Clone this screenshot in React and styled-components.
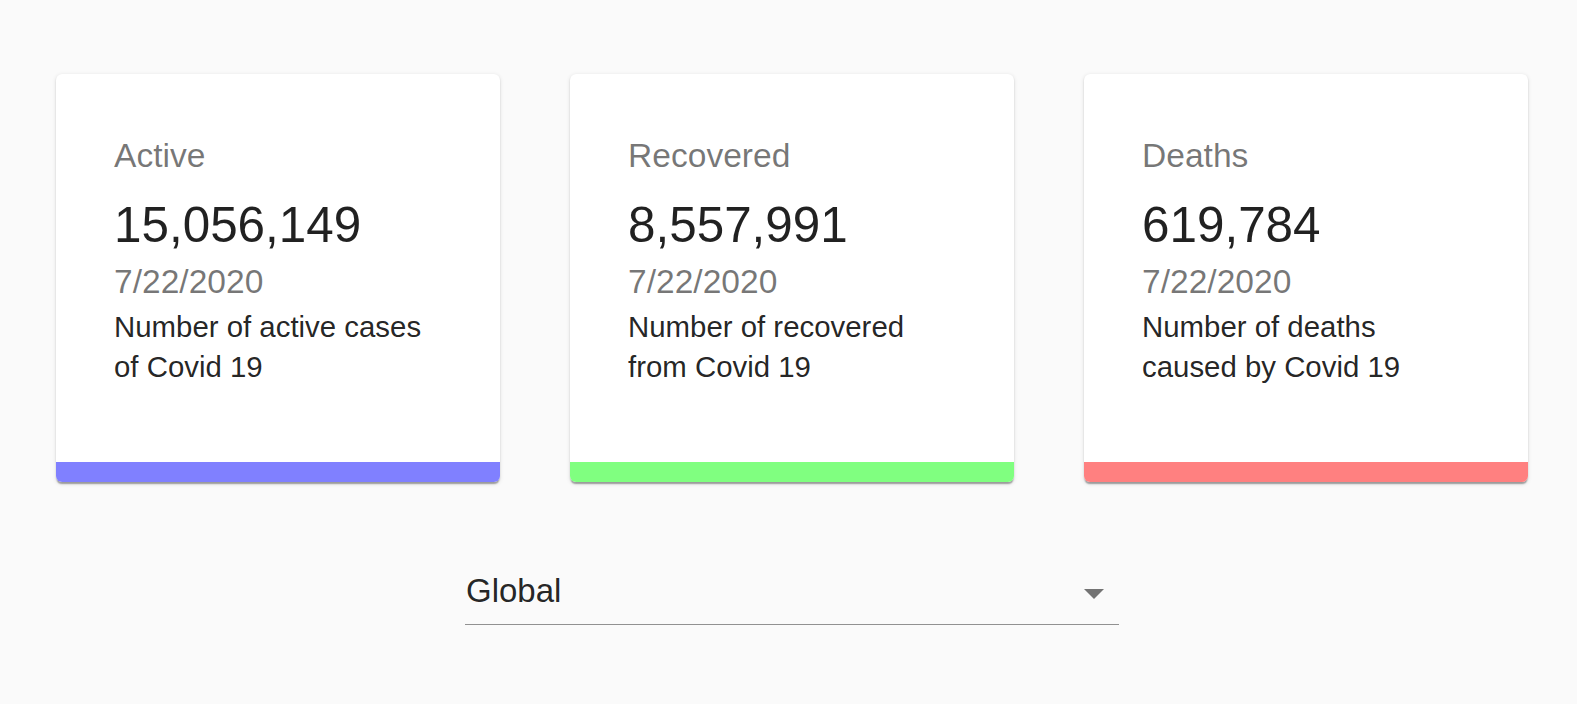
import React from "react";
import styled, { createGlobalStyle } from "styled-components";

const GlobalStyle = createGlobalStyle`
  html, body {
    margin: 0;
    padding: 0;
    background: #fafafa;
    font-family: "Liberation Sans", Arial, Helvetica, sans-serif;
  }
  * { box-sizing: border-box; }
`;

const Page = styled.main`
  width: 1472px;
  margin-left: 56px;
  padding-top: 74px;
`;

const CardGrid = styled.section`
  display: grid;
  grid-template-columns: repeat(3, 444px);
  column-gap: 70px;
`;

const Card = styled.article`
  display: flex;
  flex-direction: column;
  background: #fff;
  border-radius: 6px;
  overflow: hidden;
  height: 408px;
  box-shadow: 0 3px 1.4px -1.4px rgba(0, 0, 0, 0.2),
    0 1.4px 1.4px 0 rgba(0, 0, 0, 0.14), 0 1.4px 4.2px 0 rgba(0, 0, 0, 0.12);
`;

const CardContent = styled.div`
  flex: 1;
  padding: 59px 57px 0 58px;
`;

const Title = styled.h2`
  margin: 0 0 16px;
  font-size: 33.6px;
  line-height: 45px;
  font-weight: 400;
  color: rgba(0, 0, 0, 0.54);
`;

const Count = styled.div`
  font-size: 49.4px;
  line-height: 61px;
  font-weight: 400;
  color: rgba(0, 0, 0, 0.87);
`;

const DateText = styled.div`
  margin-top: 4px;
  font-size: 33.6px;
  line-height: 45px;
  color: rgba(0, 0, 0, 0.54);
`;

const Description = styled.p`
  margin: 3px 0 0;
  max-width: 320px;
  font-size: 29.4px;
  line-height: 40px;
  color: rgba(0, 0, 0, 0.87);
`;

const ColorBar = styled.div`
  height: 20px;
  flex: none;
  background: ${(p) => p.$color};
`;

const SelectRow = styled.div`
  margin: 89px auto 0;
  width: 654px;
  display: flex;
  align-items: center;
  padding-bottom: 13px;
  border-bottom: 1px solid rgba(0, 0, 0, 0.42);
  cursor: pointer;
`;

const SelectValue = styled.span`
  flex: 1;
  padding-left: 1px;
  font-size: 33px;
  line-height: 40px;
  color: rgba(0, 0, 0, 0.87);
`;

const Arrow = styled.span`
  width: 0;
  height: 0;
  margin: 6px 15px 0 0;
  border-left: 10px solid transparent;
  border-right: 10px solid transparent;
  border-top: 10px solid rgba(0, 0, 0, 0.54);
`;

const cards = [
  {
    title: "Active",
    count: "15,056,149",
    text: "Number of active cases of Covid 19",
    color: "#8080ff",
  },
  {
    title: "Recovered",
    count: "8,557,991",
    text: "Number of recovered from Covid 19",
    color: "#80ff80",
  },
  {
    title: "Deaths",
    count: "619,784",
    text: "Number of deaths caused by Covid 19",
    color: "#ff8080",
  },
];

export default function App() {
  return (
    <>
      <GlobalStyle />
      <Page>
        <CardGrid>
          {cards.map((c) => (
            <Card key={c.title}>
              <CardContent>
                <Title>{c.title}</Title>
                <Count>{c.count}</Count>
                <DateText>7/22/2020</DateText>
                <Description>{c.text}</Description>
              </CardContent>
              <ColorBar $color={c.color} />
            </Card>
          ))}
        </CardGrid>
        <SelectRow>
          <SelectValue>Global</SelectValue>
          <Arrow />
        </SelectRow>
      </Page>
    </>
  );
}
